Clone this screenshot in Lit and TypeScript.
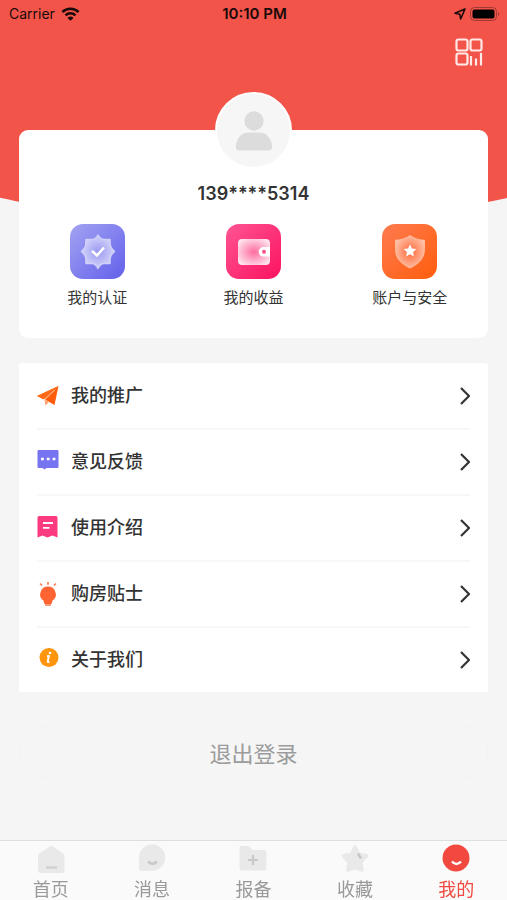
import { LitElement, html, css, svg } from "lit";
import { customElement } from "lit/decorators.js";
import { classMap } from "lit/directives/class-map.js";

const promoIcon = svg`
  <path d="M0 12 21.500 2 8.500 15.200Z" fill="#ff7a2e"/>
  <path d="M0 12 6.500 15.500 21.500 2Z" fill="#ff6a1a"/>
  <path d="M21.500 2 8 15.500l9.500 5.500Z" fill="#ff5b0a"/>
  <path d="M7.500 15.800 8.500 21.500 12 18Z" fill="#ff9f6a"/>
  <path d="M7.500 15.500 18 6" stroke="#ffd9c2" stroke-width=".8"/>`;

const feedbackIcon = svg`
  <path d="M1.500 0h19a1 1 0 0 1 1 1v16a1 1 0 0 1-1 1H9.500L7.500 19.500 5.500 18h-4a1 1 0 0 1-1-1V1a1 1 0 0 1 1-1Z" fill="#7674f0"/>
  <path d="M4 7.700h2.800v2.600H4zM9.800 7.700h2.800v2.600H9.800zM15.600 7.700h2.800v2.600h-2.800z" fill="#fff"/>`;

const guideIcon = svg`
  <path d="M2 0h17a1.500 1.500 0 0 1 1.500 1.500V21.500l-5-2-5 2-5-2-5 2V1.500A1.500 1.500 0 0 1 2 0Z" fill="#fb3a80"/>
  <path d="M6 7h10M6 11.800h6.500" stroke="#fff" stroke-width="1.800"/>`;

const tipsIcon = svg`
  <path d="M11 4.500a7.800 7.800 0 0 0-4.600 14.100L7.500 22h7l1.100-3.400A7.800 7.800 0 0 0 11 4.500Z" fill="#ff6432"/>
  <path d="M8 22h6v2H8z" fill="#ff9a78"/>
  <path d="M11 0v2.800M3 1.500l2 2M19 1.500l-2 2" stroke="#ff7a50" stroke-width="1.700"/>`;

const aboutIcon = svg`
  <circle cx="12" cy="9.500" r="9.500" fill="#ff940d"/>
  <circle cx="13" cy="5" r="1.300" fill="#fff"/>
  <path d="M10 8.300h1.900l-1.200 5.300q-.1 1 1.700 .2" stroke="#fff" stroke-width="1.900" fill="none"/>`;

const certIcon = svg`
  <defs>
    <linearGradient id="cert-bg" x1="0" y1="0" x2="1" y2="1"><stop stop-color="#a3a3f3"/><stop offset="1" stop-color="#6260ea"/></linearGradient>
    <radialGradient id="cert-fg" cx=".5" cy=".5" r=".55"><stop stop-color="#9a9af1"/><stop offset="1" stop-color="#d8d8fb"/></radialGradient>
  </defs>
  <rect width="55" height="55" rx="13" fill="url(#cert-bg)"/>
  <path d="M28 11q2.500 4.500 6 4.500h6q0 3.500 .3 6 .7 3 4.200 6-3.500 3-4.200 6-.3 2.500-.3 6h-6q-3.500 0-6 5-2.500-5-6-5h-6q0-3.500-.3-6-.7-3-4.200-6 3.500-3 4.200-6 .3-2.500.3-6h6q3.500 0 6-4.500Z" fill="url(#cert-fg)" stroke="#cfcff9" stroke-width="1.500" stroke-linejoin="round"/>
  <path d="m22 27 5 4.500 7-8" stroke="#fff" stroke-width="2.500" fill="none"/>`;

const incomeIcon = svg`
  <defs>
    <linearGradient id="income-bg" x1="0" y1="0" x2="1" y2="1"><stop stop-color="#ff5593"/><stop offset="1" stop-color="#fb1260"/></linearGradient>
    <radialGradient id="income-fg" cx=".5" cy=".5" r=".6"><stop stop-color="#fd6c9f"/><stop offset="1" stop-color="#ffe3ed"/></radialGradient>
  </defs>
  <rect width="55" height="55" rx="13" fill="url(#income-bg)"/>
  <rect x="12" y="15" width="32" height="26" rx="4" fill="url(#income-fg)"/>
  <path d="M44 23h-6.500a4.800 4.800 0 0 0 0 9.600H44Z" fill="#fff"/>
  <circle cx="38" cy="27.800" r="2" fill="#fb4f88"/>`;

const safetyIcon = svg`
  <defs>
    <linearGradient id="safe-bg" x1="0" y1="0" x2="1" y2="1"><stop stop-color="#ff7b50"/><stop offset="1" stop-color="#ff5d0c"/></linearGradient>
    <radialGradient id="safe-fg" cx=".5" cy=".5" r=".6"><stop stop-color="#ff6a3a"/><stop offset="1" stop-color="#ffc9b2"/></radialGradient>
  </defs>
  <rect width="55" height="55" rx="13" fill="url(#safe-bg)"/>
  <path d="M28 11.500c4.500 3.300 9 4.500 14.500 4.700v9.300c0 8.500-5.500 14.500-14.500 18.500-9-4-14.500-10-14.500-18.500v-9.300c5.500-.2 10-1.400 14.500-4.700Z" fill="url(#safe-fg)" stroke="#ffc0a4" stroke-width=".8"/>
  <path d="m28 20.500 2 3.900 4.300.6-3.200 3 .8 4.400-3.900-2.100-3.900 2.100.8-4.400-3.200-3 4.300-.6Z" fill="#fff"/>`;

const homeTab = svg`
  <path d="M14 2.500q1.500-1 3 0L27 9.500q1.500 1 1.500 3V26q0 3-3 3H5q-3 0-3-3V12.500q0-2 1.500-3Z" fill="#e9e9ea"/>
  <path d="M10 23.500h11" stroke="#cfcfd1" stroke-width="2.300"/>`;
const messageTab = svg`
  <path d="M15.500 .3a13.200 13.200 0 1 1-1 26.400H4.500A2.500 2.500 0 0 1 2 24V13A13.200 13.200 0 0 1 15.500 .3Z" fill="#e9e9ea"/>
  <path d="M11 17.500q4.500 4.500 9 0" stroke="#c9c9cb" stroke-width="2.500" fill="none"/>`;
const reportTab = svg`
  <path d="M4 2h7l3 4h12q2.500 0 2.500 2.500V24q0 2.500-2.500 2.500H4Q1.500 26.500 1.500 24V4.500Q1.500 2 4 2Z" fill="#e9e9ea"/>
  <path d="M10 16h10M15 11v10" stroke="#c9c9cb" stroke-width="2.200"/>`;
const favoriteTab = svg`
  <path d="m15 3 3.500 7.300 8 1.500-5.500 6.200 1 8L15 23.500 8 26l1-8L3.500 11.800l8-1.500Z" fill="#e9e9ea" stroke="#e9e9ea" stroke-width="3.500" stroke-linejoin="round"/>
  <path d="m18 9.500 3 5" stroke="#c6c6c8" stroke-width="2.500"/>`;
const mineTab = svg`
  <circle cx="15" cy="14" r="13.500" fill="#f1493f"/>
  <path d="M11 17.500q4.500 5 9 0" stroke="#fff" stroke-width="2.500" fill="none"/>`;

const actions = [
  { label: "我的认证", icon: certIcon },
  { label: "我的收益", icon: incomeIcon },
  { label: "账户与安全", icon: safetyIcon },
];

const menu = [
  { label: "我的推广", icon: promoIcon },
  { label: "意见反馈", icon: feedbackIcon },
  { label: "使用介绍", icon: guideIcon },
  { label: "购房贴士", icon: tipsIcon },
  { label: "关于我们", icon: aboutIcon },
];

const tabs = [
  { label: "首页", icon: homeTab, active: false },
  { label: "消息", icon: messageTab, active: false },
  { label: "报备", icon: reportTab, active: false },
  { label: "收藏", icon: favoriteTab, active: false },
  { label: "我的", icon: mineTab, active: true },
];

@customElement("app-root")
export class AppRoot extends LitElement {
  static styles = css`
    :host {
      display: flex;
      flex-direction: column;
      min-height: 100vh;
      background: #f5f5f5;
      color: #333;
      font-family: Inter, "Noto Sans CJK SC", sans-serif;
    }
    * {
      box-sizing: border-box;
    }
    svg {
      display: block;
      flex: none;
    }
    button {
      border: 0;
      padding: 0;
      background: none;
      font: inherit;
      color: inherit;
      cursor: pointer;
    }
    a {
      color: inherit;
      text-decoration: none;
    }
    .page {
      position: relative;
      flex: 1;
      padding-bottom: 24px;
      overflow-x: clip;
    }
    /* Twice the page width, so only the shallow part of the arc shows. */
    .backdrop {
      position: absolute;
      inset: 0 -50% auto;
      height: 223px;
      background: #f2544a;
      border-radius: 0 0 50% 50% / 0 0 187px 187px;
    }
    .content {
      position: relative;
    }
    .status {
      display: grid;
      grid-template-columns: 1fr auto 1fr;
      align-items: center;
      height: 27px;
      padding: 0 7px 0 9px;
      color: #1a0a09;
      font-size: 14px;
    }
    .status-left,
    .status-right {
      display: flex;
      align-items: center;
      gap: 6px;
    }
    .status-right {
      justify-content: flex-end;
      gap: 4px;
    }
    .time {
      font-size: 15px;
      font-weight: 600;
    }
    .toolbar {
      display: flex;
      justify-content: flex-end;
      height: 65px;
      padding: 11px 24px 0;
    }
    .toolbar button {
      height: 28px;
    }
    .card {
      display: flex;
      flex-direction: column;
      align-items: center;
      margin: 38px 19px 0;
      padding-bottom: 29px;
      border-radius: 9px;
      background: #fff;
    }
    .avatar {
      display: grid;
      place-items: center;
      width: 77px;
      height: 77px;
      margin-top: -38px;
      border: 2px solid #fff;
      border-radius: 50%;
      background: #f6f6f6;
    }
    .phone {
      margin: 13px 0 0;
      font-size: 18px;
      line-height: 24px;
      font-weight: 600;
    }
    .actions {
      display: grid;
      grid-template-columns: repeat(3, 1fr);
      width: 100%;
      margin-top: 18px;
    }
    .action {
      display: flex;
      flex-direction: column;
      align-items: center;
      gap: 8px;
      font-size: 15px;
      line-height: 22px;
    }
    .menu {
      margin: 25px 19px 0;
      padding: 1px 18px 0;
      border-radius: 3px;
      background: #fff;
      list-style: none;
    }
    .menu li + li {
      border-top: 2px solid #f7f7f7;
    }
    .row {
      display: flex;
      align-items: center;
      gap: 12px;
      height: 64px;
      font-size: 18px;
      line-height: 26px;
      font-weight: 500;
    }
    .row .label {
      flex: 1;
    }
    .logout {
      display: block;
      width: calc(100% - 38px);
      height: 52px;
      margin: 34px 19px 0;
      border: 1px solid #f3f3f3;
      border-radius: 26px;
      color: #9b9b9b;
      font-size: 22px;
    }
    .tabs {
      position: sticky;
      bottom: 0;
      display: grid;
      grid-template-columns: repeat(5, 1fr);
      height: 60px;
      border-top: 1px solid #dedede;
      background: #fafafa;
    }
    .tab {
      display: flex;
      flex-direction: column;
      align-items: center;
      padding-top: 3px;
      gap: 5px;
      color: #999;
      font-size: 18px;
      line-height: 23px;
    }
    .tab.active {
      color: #f1493f;
    }
  `;

  render() {
    return html`
      <main class="page">
        <div class="backdrop"></div>
        <div class="content">
          <div class="status">
            <div class="status-left">
              <span>Carrier</span>
              <svg width="19" height="14" viewBox="0 0 18 14" fill="none" stroke="#1a0a09" stroke-width="2.500">
                <path d="M.9 5a11.500 11.500 0 0 1 16.200 0M4 8.300a7.200 7.200 0 0 1 10 0" />
                <path d="M9 13.800 6 10.900a4.300 4.300 0 0 1 6 0Z" fill="#1a0a09" stroke="none" />
              </svg>
            </div>
            <span class="time">10:10 PM</span>
            <div class="status-right">
              <svg width="12" height="12" viewBox="0 0 12 12" fill="none" stroke="#1a0a09" stroke-width="1.600" stroke-linejoin="round">
                <path d="M11 1 1 5.300l4.800.9.900 4.800Z" />
              </svg>
              <svg width="30" height="14" viewBox="0 0 30 14">
                <rect x=".5" y=".5" width="26" height="13" rx="4" fill="none" stroke="#9c3a33" />
                <rect x="2.500" y="2.500" width="22" height="9" rx="2" fill="#000" />
                <path d="M28 5q2.500 2 0 4Z" fill="#9c3a33" />
              </svg>
            </div>
          </div>
          <div class="toolbar">
            <button type="button" aria-label="二维码">
              <svg width="28" height="28" viewBox="0 0 28 28" fill="none" stroke="#ffe9e6" stroke-width="2.200">
                <rect x="1.500" y="1.500" width="11" height="11" rx="2" />
                <rect x="15.500" y="1.500" width="11" height="11" rx="2" />
                <rect x="1.500" y="15.500" width="11" height="11" rx="2" />
                <path d="M16 18v9.500M21 20.500v7M26 15v12.500" />
              </svg>
            </button>
          </div>
          <section class="card">
            <div class="avatar">
              <svg width="38" height="40" viewBox="0 0 38 40" fill="#dcdcdc">
                <circle cx="19" cy="10" r="9.700" />
                <path d="M13 21.500h12q9 0 12 11.500v3q0 3.500-3.500 3.500h-29Q1 39.500 1 36v-3q3-11.500 12-11.500Z" />
              </svg>
            </div>
            <h1 class="phone">139****5314</h1>
            <div class="actions">
              ${actions.map(
                (a) => html`<a class="action" href="#">
                  <svg width="55" height="55" viewBox="0 0 55 55">${a.icon}</svg>
                  <span>${a.label}</span>
                </a>`
              )}
            </div>
          </section>
          <ul class="menu">
            ${menu.map(
              (m) => html`<li>
                <a class="row" href="#">
                  <svg width="22" height="24" viewBox="0 0 22 24" fill="none">${m.icon}</svg>
                  <span class="label">${m.label}</span>
                  <svg width="10" height="18" viewBox="0 0 10 18" fill="none" stroke="#333" stroke-width="2.200">
                    <path d="m1 1 8 8-8 8" />
                  </svg>
                </a>
              </li>`
            )}
          </ul>
          <button class="logout" type="button">退出登录</button>
        </div>
      </main>
      <nav class="tabs">
        ${tabs.map(
          (t) => html`<a class=${classMap({ tab: true, active: t.active })} href="#">
            <svg width="30" height="29" viewBox="0 0 30 29">${t.icon}</svg>
            <span>${t.label}</span>
          </a>`
        )}
      </nav>
    `;
  }
}
